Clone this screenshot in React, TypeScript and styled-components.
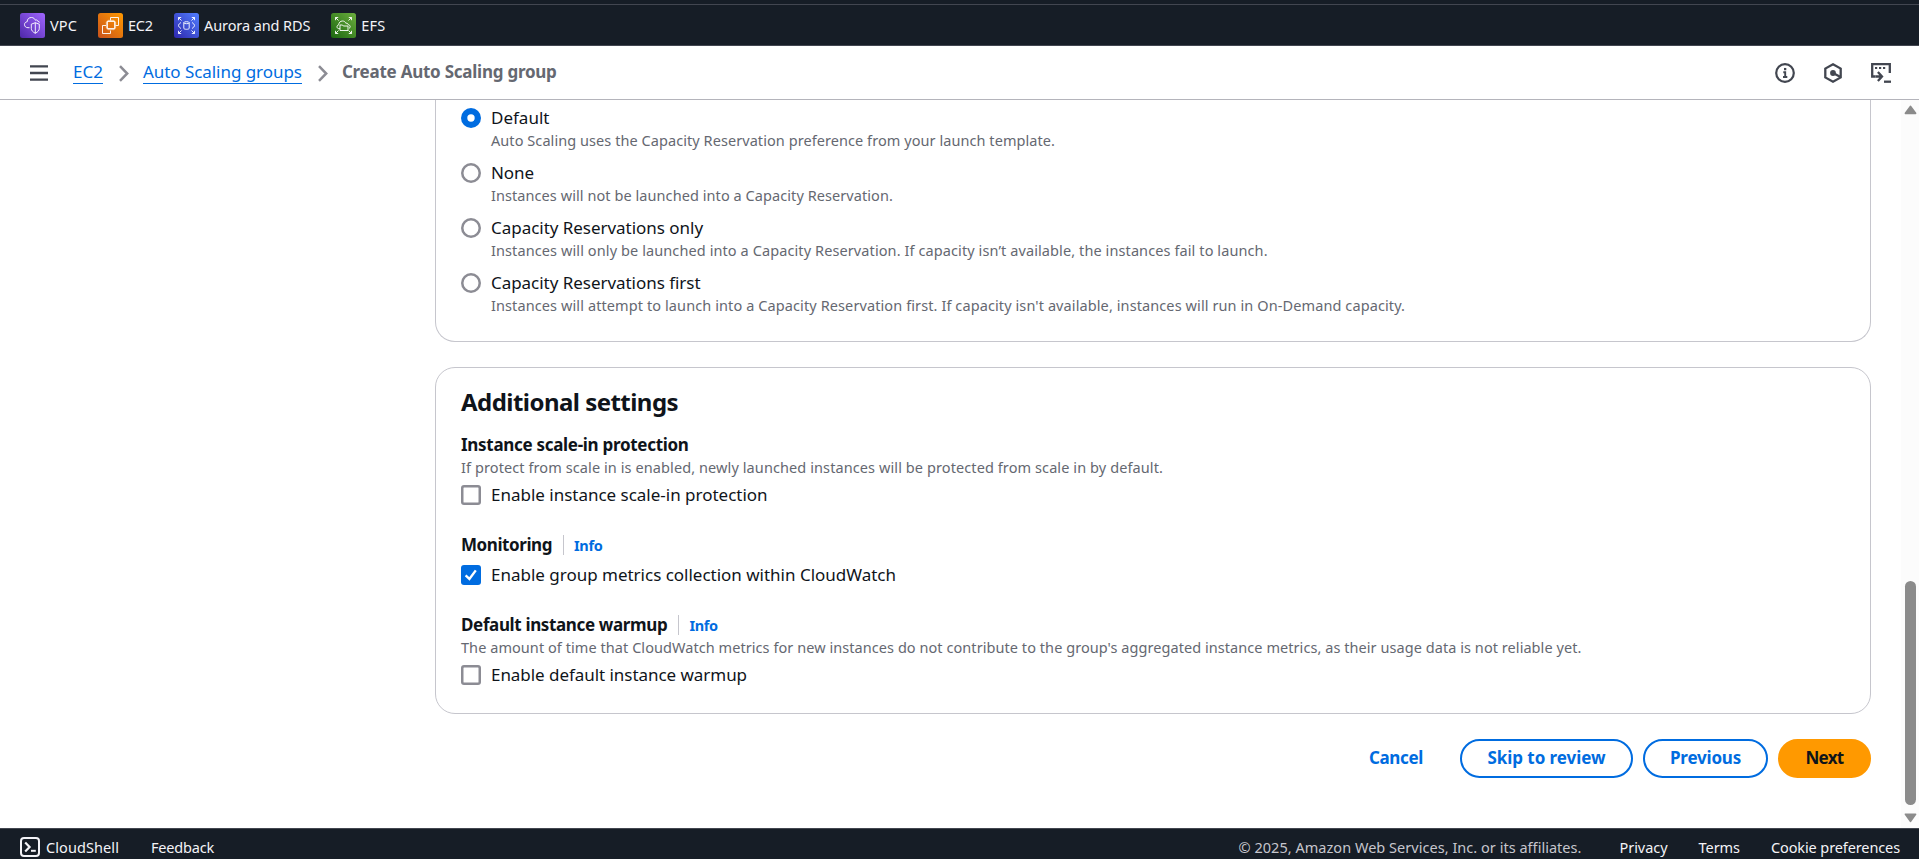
import React, { useState } from "react";
import styled, { createGlobalStyle, css } from "styled-components";

const GlobalStyle = createGlobalStyle`
  *, *::before, *::after { box-sizing: border-box; }
  html, body { margin: 0; padding: 0; }
  body {
    background: #ffffff;
    color: #0f141a;
    font-family: "Noto Sans", "Open Sans", sans-serif;
    overflow: hidden;
  }
`;

const Track = styled.span<{ $em?: number }>`
  letter-spacing: ${({ $em = 0 }) => $em}em;
  white-space: nowrap;
`;

/* ---------- shell ---------- */

const Page = styled.div`
  display: flex;
  flex-direction: column;
  width: 100%;
  height: 100vh;
  overflow: hidden;
`;

const FavoritesBar = styled.nav`
  flex: none;
  height: 46px;
  padding-top: 4px;
  background: #161d26;
  border-bottom: 1px solid #424650;
`;

const FavoritesList = styled.div`
  display: flex;
  align-items: center;
  gap: 21px;
  height: 41px;
  padding: 0 20px;
  border-top: 1px solid #424650;
`;

const Favorite = styled.a`
  display: flex;
  align-items: center;
  gap: 5px;
  color: #f3f3f7;
  font-size: 14.5px;
  line-height: 20px;
  text-decoration: none;
  svg { display: block; }
`;

const BreadcrumbBar = styled.header`
  flex: none;
  display: flex;
  align-items: center;
  height: 54px;
  padding: 1px 28px 0 30px;
  border-bottom: 1px solid #b4b4bb;
  background: #ffffff;
`;

const IconButton = styled.button`
  display: flex;
  padding: 0;
  border: 0;
  background: none;
  color: #424650;
  svg { display: block; }
`;

const Breadcrumbs = styled.ol`
  display: flex;
  flex: 1;
  align-items: center;
  margin: 0 0 0 25px;
  padding: 0;
  list-style: none;
  font-size: 17px;
  line-height: 25px;
`;

const Crumb = styled.li`
  display: flex;
  align-items: center;
`;

const CrumbLink = styled.a`
  height: 21px;
  line-height: 18px;
  border-bottom: 1px solid #006ce0;
  color: #006ce0;
  text-decoration: none;
`;

const CurrentCrumb = styled.span`
  height: 21px;
  line-height: 18px;
  color: #656871;
  font-weight: 700;
`;

const Separator = styled.svg`
  display: block;
  margin: 1px 14px 0 16px;
`;

const ToolIcons = styled.div`
  display: flex;
  align-items: center;
  gap: 28px;
`;

const Body = styled.div`
  flex: 1;
  display: flex;
  min-height: 0;
`;

const Content = styled.main`
  flex: 1;
  display: flex;
  flex-direction: column;
  gap: 25px;
  padding: 0 30px 0 435px;
`;

const ScrollTrack = styled.div`
  flex: none;
  display: flex;
  flex-direction: column;
  align-items: center;
  width: 18px;
  padding: 5px 0 5px 1px;
  background: #fcfcfc;
  svg { display: block; flex: none; }
`;

const ScrollThumb = styled.div`
  width: 11px;
  height: 224px;
  margin: auto 0 8px;
  border-radius: 6px;
  background: #8b8b8b;
`;

/* ---------- cards and form parts ---------- */

const Card = styled.section<{ $cut?: boolean }>`
  border: 1px solid #c6c6cd;
  border-radius: 20px;
  padding: 19px 25px 26px;
  ${({ $cut }) =>
    $cut &&
    css`
      border-top: 0;
      border-radius: 0 0 20px 20px;
      padding-top: 5px;
    `}
`;

const CardTitle = styled.h2`
  margin: 0 0 15px;
  font-size: 24px;
  line-height: 30px;
  font-weight: 700;
`;

const Stack = styled.div<{ $gap: number }>`
  display: flex;
  flex-direction: column;
  gap: ${({ $gap }) => $gap}px;
`;

const Choice = styled.label`
  display: grid;
  grid-template-columns: 20px 1fr;
  column-gap: 10px;
  align-items: center;
`;

const ChoiceLabel = styled.span`
  font-size: 17px;
  line-height: 25px;
`;

const Description = styled.span`
  display: block;
  color: #656871;
  font-size: 14.5px;
  line-height: 20px;
`;

const ChoiceDescription = styled(Description)`
  grid-column: 2;
`;

const Field = styled.div`
  display: flex;
  flex-direction: column;
`;

const FieldChoice = styled(Choice)`
  margin-top: 5px;
`;

const FieldHeader = styled.div`
  display: flex;
  align-items: center;
  height: 25px;
  font-size: 17px;
  line-height: 25px;
  font-weight: 700;
`;

const InfoLink = styled.a`
  display: flex;
  align-items: center;
  height: 20px;
  margin-left: 11px;
  padding: 1px 0 0 10px;
  border-left: 1px solid #c6c6cd;
  color: #006ce0;
  font-size: 14.5px;
  font-weight: 700;
`;

const RadioMark = styled.span<{ $on: boolean }>`
  width: 20px;
  height: 20px;
  border-radius: 50%;
  background: #ffffff;
  box-shadow: inset 0 0 0 ${({ $on }) => ($on ? "6.3px #006ce0" : "2.5px #8c8c94")};
`;

const CheckMark = styled.span<{ $on: boolean }>`
  display: flex;
  width: 20px;
  height: 20px;
  border-radius: 3px;
  background: ${({ $on }) => ($on ? "#006ce0" : "#ffffff")};
  box-shadow: ${({ $on }) => ($on ? "none" : "inset 0 0 0 2.5px #8c8c94")};
`;

const Actions = styled.div`
  display: flex;
  justify-content: flex-end;
  gap: 10px;
`;

const buttonKinds = {
  link: css`
    border-color: transparent;
    background: transparent;
    color: #006ce0;
  `,
  normal: css`
    border-color: #006ce0;
    background: #ffffff;
    color: #006ce0;
  `,
  primary: css`
    border-color: #ff9900;
    background: #ff9900;
    color: #0f141a;
  `,
};

const Button = styled.button<{ $kind: keyof typeof buttonKinds; $width: number }>`
  width: ${({ $width }) => $width}px;
  height: 39px;
  padding: 0 0 2px;
  border: 2px solid;
  border-radius: 20px;
  font: 700 17px/25px "Noto Sans", "Open Sans", sans-serif;
  ${({ $kind }) => buttonKinds[$kind]}
`;

/* ---------- footer ---------- */

const Footer = styled.footer`
  flex: none;
  display: flex;
  align-items: flex-start;
  height: 31px;
  padding: 8px 19px 0 20px;
  border-top: 1px solid #424650;
  background: #161d26;
  color: #f3f3f7;
  font-size: 14.5px;
  line-height: 20px;
`;

const ShellButton = styled.a`
  display: flex;
  align-items: center;
  gap: 6px;
  margin-right: 32px;
`;

const Legal = styled.div`
  display: flex;
  gap: 31px;
  margin-left: auto;
`;

const Copyright = styled.span`
  margin-right: 7px;
  color: #c6c6cd;
`;

/* ---------- icons ---------- */

type TileProps = { id: string; from: string; to: string; children: React.ReactNode };

const Tile = ({ id, from, to, children }: TileProps) => (
  <svg width="25" height="25" viewBox="0 0 25 25">
    <defs>
      <linearGradient id={id} x1="0" y1="1" x2="1" y2="0">
        <stop offset="0" stopColor={from} />
        <stop offset="1" stopColor={to} />
      </linearGradient>
    </defs>
    <rect width="25" height="25" rx="2.5" fill={`url(#${id})`} />
    <g fill="none" stroke="#ffffff" strokeWidth="1" strokeOpacity="0.9" strokeLinejoin="round">
      {children}
    </g>
  </svg>
);

const VpcIcon = () => (
  <Tile id="vpc" from="#4d27a8" to="#a166ff">
    <path d="M9.5 14.700H8c-2 0-3.500-1.200-3.500-3.100 0-1.700 1.100-2.600 2.700-2.900C7.200 6 9 4.500 11.500 4.500c1.900 0 3.200 1.100 3.800 2.700 1.300-.7 2.500 0 2.700 1.300.8.100 1.500.4 1.800 1" />
    <path d="M15.300 9.700l4 1.500v4.100c0 2.200-1.500 3.700-4 5-2.500-1.300-4-2.800-4-5v-4.100z" />
    <path d="M15.300 9.700v10.600" />
  </Tile>
);

const Ec2Icon = () => (
  <Tile id="ec2" from="#c8511b" to="#ff9900">
    <path d="M8 12.500H4.500v8H12.500V17.500M12.500 7.500V4.500H20.500V12.500H17.500" />
    <rect x="9.200" y="8.200" width="7.600" height="7.600" rx="0.800" strokeWidth="1.500" />
    <path
      d="M11 6.700V8M13 6.700V8M15 6.700V8M11 16v1.300M13 16v1.300M15 16v1.300M7.700 10H9M7.700 12H9M7.700 14H9M17 10h1.300M17 12h1.300M17 14h1.300"
      strokeWidth="0.600"
    />
  </Tile>
);

const CornerArrows = () => (
  <path d="M4.500 7.200V4.500H7.200M4.500 4.500L7.500 7.500M17.800 4.500H20.500V7.200M20.500 4.500L17.500 7.500M4.500 17.800V20.500H7.200M4.500 20.500L7.500 17.500M17.800 20.500H20.500V17.800M20.500 20.500L17.500 17.500" />
);

const RdsIcon = () => (
  <Tile id="rds" from="#2e27ad" to="#527fff">
    <CornerArrows />
    <ellipse cx="12.500" cy="9.700" rx="2.700" ry="1" />
    <path d="M9.800 9.700v5.600c0 .6 1.200 1 2.700 1s2.700-.4 2.700-1V9.700" />
    <path d="M7 9.500C5.500 10.500 4.500 11.500 4.500 12.500s1 2 2.500 3M18 9.500c1.500 1 2.500 2 2.500 3s-1 2-2.500 3" />
  </Tile>
);

const EfsIcon = () => (
  <Tile id="efs" from="#1b660f" to="#6cae3e">
    <CornerArrows />
    <path d="M9 15.700H8c-1.200 0-2-.8-2-1.900s.8-1.900 1.800-2c0-2.200 1.500-3.800 3.700-3.800 1.700 0 2.800.9 3.400 2.300 1.300-.4 2.300.4 2.400 1.500 1.200.1 1.900.8 1.900 1.900 0 .8-.5 1.400-1.200 1.700" />
    <path d="M9 17.500V12h2.500l.8 1H17v4.500z" />
  </Tile>
);

const MenuIcon = () => (
  <svg width="18" height="16" viewBox="0 0 18 16">
    <path d="M0 1.300h18M0 8h18M0 14.700h18" stroke="currentColor" strokeWidth="2.300" />
  </svg>
);

const Chevron = () => (
  <Separator width="10" height="17" viewBox="0 0 10 17" fill="none" stroke="#8c8c94" strokeWidth="2.500">
    <path d="M1 1.200L8.200 8.500 1 15.800" />
  </Separator>
);

const InfoIcon = () => (
  <svg width="20" height="20" viewBox="0 0 20 20" fill="none" stroke="currentColor">
    <circle cx="10" cy="10" r="8.800" strokeWidth="2.200" />
    <path d="M8.300 9.300h1.900V14M8 14h4.300" strokeWidth="1.900" />
    <path d="M9 6.100h2.300" strokeWidth="2.300" />
  </svg>
);

const HexIcon = () => (
  <svg width="20" height="20" viewBox="0 0 20 20" fill="none" stroke="currentColor" strokeWidth="2.300">
    <path d="M10 1.300L17.700 5.600V14.400L10 18.700 2.300 14.400V5.600z" />
    <circle cx="10" cy="10" r="2.900" fill="currentColor" stroke="none" />
    <path d="M10 10L17.500 14" />
  </svg>
);

const TerminalIcon = () => (
  <svg width="20" height="20" viewBox="0 0 20 20" fill="none" stroke="currentColor" strokeWidth="2.300">
    <path d="M4.500 13.500H1.200V1.200H18.800V10" />
    <path d="M4 5h2.200M8 5h2.200M12 5h2.200" strokeWidth="2" />
    <path d="M4.500 13.500H11M6.900 9L11 13.500 6.900 18" />
    <path d="M13 18.700H20" />
  </svg>
);

const ShellIcon = () => (
  <svg width="20" height="20" viewBox="0 0 20 20" fill="none" stroke="#f3f3f7">
    <rect x="1" y="1" width="18" height="18" rx="3" strokeWidth="2" />
    <path d="M5.200 5.500L9.600 10 5.200 14.500" strokeWidth="2.200" />
    <path d="M11 13.800h4.800" strokeWidth="2" />
  </svg>
);

const Tick = () => (
  <svg width="20" height="20" viewBox="0 0 20 20" fill="none" stroke="#ffffff" strokeWidth="2.400">
    <path d="M4.600 10.400L8.400 13.900 14.800 5.400" />
  </svg>
);

const ScrollArrow = ({ down = false }: { down?: boolean }) => (
  <svg width="13" height="10" viewBox="0 0 13 10">
    <path
      d={down ? "M1.500 1.300H11.500L6.500 8.300z" : "M1.500 8.300H11.500L6.500 1.500z"}
      fill="#8b8b8b"
      stroke="#8b8b8b"
      strokeWidth="1.800"
      strokeLinejoin="round"
    />
  </svg>
);

/* ---------- data ---------- */

const favorites = [
  { name: "VPC", em: 0.007, Icon: VpcIcon },
  { name: "EC2", em: -0.0115, Icon: Ec2Icon },
  { name: "Aurora and RDS", em: -0.0064, Icon: RdsIcon },
  { name: "EFS", em: 0.009, Icon: EfsIcon },
];

const reservationOptions = [
  {
    label: "Default",
    em: 0,
    text: "Auto Scaling uses the Capacity Reservation preference from your launch template.",
    textEm: 0.0045,
  },
  {
    label: "None",
    em: -0.005,
    text: "Instances will not be launched into a Capacity Reservation.",
    textEm: 0.0048,
  },
  {
    label: "Capacity Reservations only",
    em: -0.0019,
    text: "Instances will only be launched into a Capacity Reservation. If capacity isn’t available, the instances fail to launch.",
    textEm: 0.0068,
  },
  {
    label: "Capacity Reservations first",
    em: -0.0023,
    text: "Instances will attempt to launch into a Capacity Reservation first. If capacity isn't available, instances will run in On-Demand capacity.",
    textEm: 0.0069,
  },
];

const settings = [
  {
    title: "Instance scale-in protection",
    titleEm: -0.0175,
    info: false,
    text: "If protect from scale in is enabled, newly launched instances will be protected from scale in by default.",
    textEm: 0.0065,
    option: "Enable instance scale-in protection",
    optionEm: -0.0006,
  },
  {
    title: "Monitoring",
    titleEm: -0.0251,
    info: true,
    text: "",
    textEm: 0,
    option: "Enable group metrics collection within CloudWatch",
    optionEm: -0.0006,
  },
  {
    title: "Default instance warmup",
    titleEm: -0.021,
    info: true,
    text: "The amount of time that CloudWatch metrics for new instances do not contribute to the group's aggregated instance metrics, as their usage data is not reliable yet.",
    textEm: 0.0041,
    option: "Enable default instance warmup",
    optionEm: -0.0027,
  },
];

export default function App() {
  const [reservation, setReservation] = useState(0);
  const [checked, setChecked] = useState([false, true, false]);

  return (
    <Page>
      <GlobalStyle />
      <FavoritesBar>
        <FavoritesList>
          {favorites.map(({ name, em, Icon }) => (
            <Favorite key={name}>
              <Icon />
              <Track $em={em}>{name}</Track>
            </Favorite>
          ))}
        </FavoritesList>
      </FavoritesBar>

      <BreadcrumbBar>
        <IconButton aria-label="Open navigation">
          <MenuIcon />
        </IconButton>
        <Breadcrumbs>
          <Crumb>
            <CrumbLink>
              <Track>EC2</Track>
            </CrumbLink>
            <Chevron />
          </Crumb>
          <Crumb>
            <CrumbLink>
              <Track $em={-0.0028}>Auto Scaling groups</Track>
            </CrumbLink>
            <Chevron />
          </Crumb>
          <Crumb>
            <CurrentCrumb>
              <Track $em={-0.0145}>Create Auto Scaling group</Track>
            </CurrentCrumb>
          </Crumb>
        </Breadcrumbs>
        <ToolIcons>
          <IconButton aria-label="Info">
            <InfoIcon />
          </IconButton>
          <IconButton aria-label="Assistant">
            <HexIcon />
          </IconButton>
          <IconButton aria-label="Command line">
            <TerminalIcon />
          </IconButton>
        </ToolIcons>
      </BreadcrumbBar>

      <Body>
        <Content>
          <Card $cut>
            <Stack $gap={10}>
              {reservationOptions.map((o, i) => (
                <Choice key={o.label} onClick={() => setReservation(i)}>
                  <RadioMark $on={reservation === i} />
                  <ChoiceLabel>
                    <Track $em={o.em}>{o.label}</Track>
                  </ChoiceLabel>
                  <ChoiceDescription>
                    <Track $em={o.textEm}>{o.text}</Track>
                  </ChoiceDescription>
                </Choice>
              ))}
            </Stack>
          </Card>

          <Card>
            <CardTitle>
              <Track $em={-0.0225}>Additional settings</Track>
            </CardTitle>
            <Stack $gap={25}>
              {settings.map((s, i) => (
                <Field key={s.title}>
                  <FieldHeader>
                    <Track $em={s.titleEm}>{s.title}</Track>
                    {s.info && (
                      <InfoLink>
                        <Track $em={-0.022}>Info</Track>
                      </InfoLink>
                    )}
                  </FieldHeader>
                  {s.text && (
                    <Description>
                      <Track $em={s.textEm}>{s.text}</Track>
                    </Description>
                  )}
                  <FieldChoice
                    onClick={() => setChecked(checked.map((c, n) => (n === i ? !c : c)))}
                  >
                    <CheckMark $on={checked[i]}>{checked[i] && <Tick />}</CheckMark>
                    <ChoiceLabel>
                      <Track $em={s.optionEm}>{s.option}</Track>
                    </ChoiceLabel>
                  </FieldChoice>
                </Field>
              ))}
            </Stack>
          </Card>

          <Actions>
            <Button $kind="link" $width={108}>
              <Track $em={-0.0209}>Cancel</Track>
            </Button>
            <Button $kind="normal" $width={173}>
              <Track $em={-0.0033}>Skip to review</Track>
            </Button>
            <Button $kind="normal" $width={125}>
              <Track $em={-0.0119}>Previous</Track>
            </Button>
            <Button $kind="primary" $width={93}>
              <Track $em={-0.0417}>Next</Track>
            </Button>
          </Actions>
        </Content>

        <ScrollTrack>
          <ScrollArrow />
          <ScrollThumb />
          <ScrollArrow down />
        </ScrollTrack>
      </Body>

      <Footer>
        <ShellButton>
          <ShellIcon />
          <Track $em={0.006}>CloudShell</Track>
        </ShellButton>
        <Track $em={-0.0138}>Feedback</Track>
        <Legal>
          <Copyright>
            <Track $em={0.002}>© 2025, Amazon Web Services, Inc. or its affiliates.</Track>
          </Copyright>
          <Track $em={-0.003}>Privacy</Track>
          <Track $em={-0.004}>Terms</Track>
          <Track $em={-0.0077}>Cookie preferences</Track>
        </Legal>
      </Footer>
    </Page>
  );
}
